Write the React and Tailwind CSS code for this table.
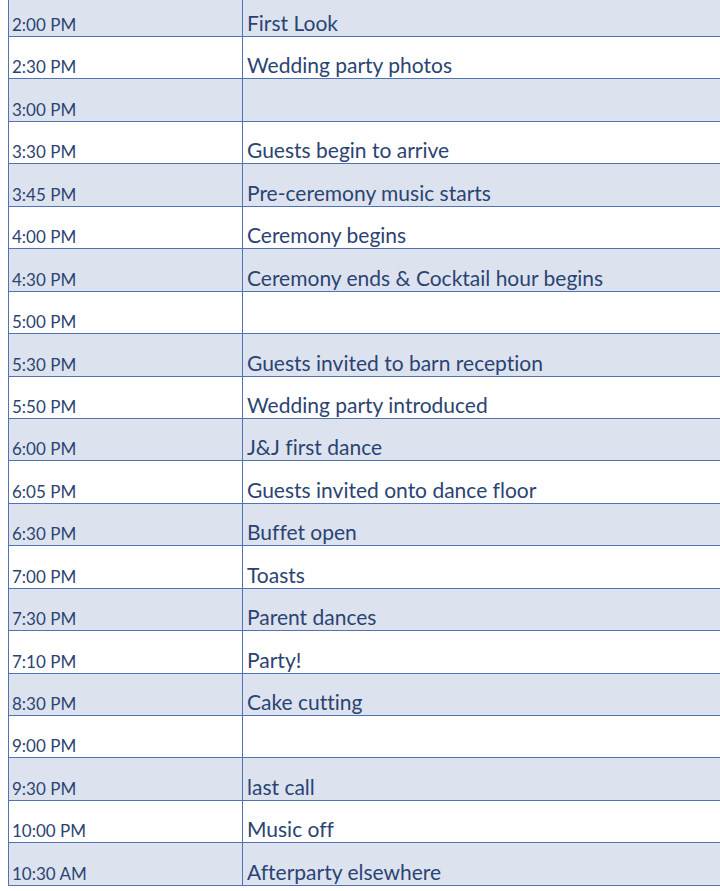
import React from "react";

const rows = [
  ["2:00 PM", "First Look"],
  ["2:30 PM", "Wedding party photos"],
  ["3:00 PM", ""],
  ["3:30 PM", "Guests begin to arrive"],
  ["3:45 PM", "Pre-ceremony music starts"],
  ["4:00 PM", "Ceremony begins"],
  ["4:30 PM", "Ceremony ends & Cocktail hour begins"],
  ["5:00 PM", ""],
  ["5:30 PM", "Guests invited to barn reception"],
  ["5:50 PM", "Wedding party introduced"],
  ["6:00 PM", "J&J first dance"],
  ["6:05 PM", "Guests invited onto dance floor"],
  ["6:30 PM", "Buffet open"],
  ["7:00 PM", "Toasts"],
  ["7:30 PM", "Parent dances"],
  ["7:10 PM", "Party!"],
  ["8:30 PM", "Cake cutting"],
  ["9:00 PM", ""],
  ["9:30 PM", "last call"],
  ["10:00 PM", "Music off"],
  ["10:30 AM", "Afterparty elsewhere"],
];

export default function App() {
  return (
    <div
      className="w-[720px] h-[891px] overflow-hidden bg-white text-[#2b4373] [font-variant-ligatures:none]"
      style={{ fontFamily: "Lato, 'Open Sans', sans-serif" }}
    >
      <div className="ml-[8px] mt-[-5.45px] w-[740px] border-l border-[#5172b4]">
        {rows.map(([t, e], i) => (
          <div
            key={i}
            className={
              i % 2 === 0
                ? "flex h-[42.45px] border-b border-[#5172b4] bg-[#dce3ef]"
                : "flex h-[42.45px] border-b border-[#5172b4] bg-white"
            }
          >
            <div className="w-[234px] shrink-0 border-r border-[#5172b4] flex items-end pl-[3px] pb-[1px] text-[17px] leading-[20px]">
              {t}
            </div>
            <div className="flex-1 flex items-end pl-[4px] pb-[1px] text-[21px] leading-[24px]">
              {e}
            </div>
          </div>
        ))}
      </div>
    </div>
  );
}
